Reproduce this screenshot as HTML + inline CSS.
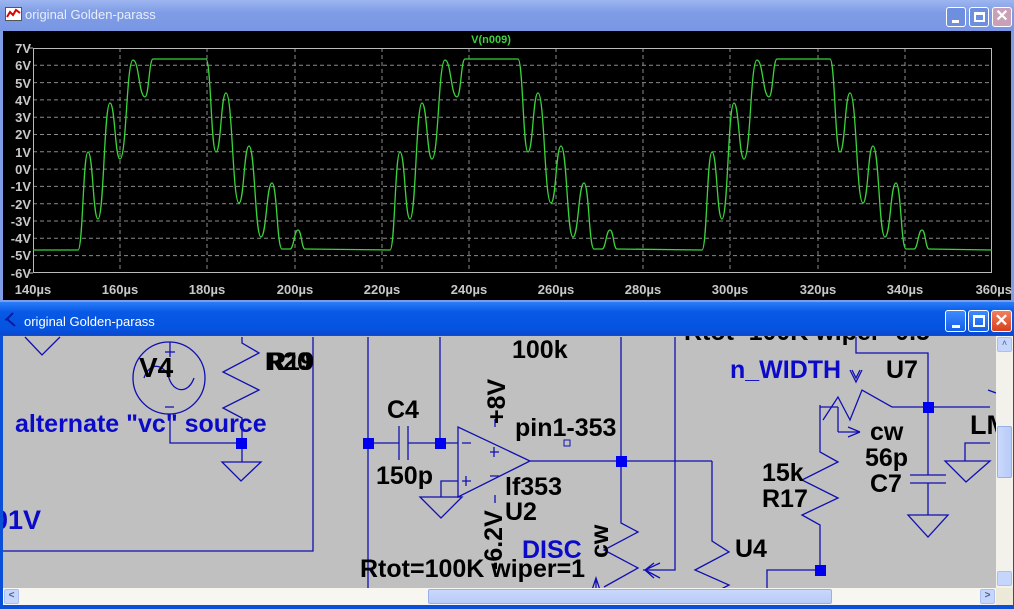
<!DOCTYPE html>
<html><head><meta charset="utf-8"><style>
*{margin:0;padding:0;box-sizing:border-box}
body{width:1014px;height:609px;overflow:hidden;background:#fff;font-family:"Liberation Sans",sans-serif;position:relative}
.abs{position:absolute}
.tb1{left:0;top:0;width:1014px;height:31px;background:linear-gradient(#9db5f0,#7f9de6 40%,#7896e3);}
.tb2{left:0;top:302px;width:1014px;height:33px;background:linear-gradient(#2a7ef8,#0859e6 30%,#0553e0 80%,#0a49d0);}
.title{color:#fff;font-size:13px;}
.btn{width:20px;height:20px;border:1px solid #fff;border-radius:3px;}
.lab{font-weight:bold;font-size:25px;color:#000;white-space:nowrap;line-height:1}
.blue{color:#0a0ac8}
</style></head><body>
<!-- top window -->
<div class="abs tb1"></div>
<svg class="abs" style="left:5px;top:7px" width="17" height="15"><rect x="0.5" y="0.5" width="16" height="13" fill="#fff" stroke="#555"/><polyline points="2,10 5,5 8,8 11,3 15,6" fill="none" stroke="#d00" stroke-width="2"/></svg>
<div class="abs title" style="left:25px;top:7px;color:#e8eefc">original Golden-parass</div>
<div class="abs btn" style="left:946px;top:7px;background:#6e8fe0"><div class="abs" style="left:5px;top:12px;width:7px;height:3px;background:#fff"></div></div>
<div class="abs btn" style="left:969px;top:7px;background:#6e8fe0"><div class="abs" style="left:4px;top:4px;width:11px;height:10px;border:2px solid #fff;border-top-width:3px"></div></div>
<div class="abs btn" style="left:992px;top:7px;background:#c8a0b8;color:#fff;font-size:16px;text-align:center;line-height:18px;font-weight:bold">✕</div>
<div class="abs" style="left:0;top:31px;width:1014px;height:271px;background:#7f9de6"></div>
<div class="abs" style="left:3px;top:31px;width:1008px;height:269px;background:#000"></div>
<svg class="abs" style="left:0;top:0" width="1014" height="300" font-family="Liberation Sans" font-size="13" font-weight="bold">
<g stroke="#8a8a8a" stroke-width="1" stroke-dasharray="4,3">
<line x1="33" x2="992" y1="65.3" y2="65.3"/><line x1="33" x2="992" y1="82.6" y2="82.6"/><line x1="33" x2="992" y1="99.9" y2="99.9"/><line x1="33" x2="992" y1="117.2" y2="117.2"/><line x1="33" x2="992" y1="134.5" y2="134.5"/><line x1="33" x2="992" y1="151.8" y2="151.8"/><line x1="33" x2="992" y1="169.1" y2="169.1"/><line x1="33" x2="992" y1="186.4" y2="186.4"/><line x1="33" x2="992" y1="203.7" y2="203.7"/><line x1="33" x2="992" y1="221" y2="221"/><line x1="33" x2="992" y1="238.3" y2="238.3"/><line x1="33" x2="992" y1="255.6" y2="255.6"/>
<line y1="48" y2="273" x1="120" x2="120"/><line y1="48" y2="273" x1="207" x2="207"/><line y1="48" y2="273" x1="295" x2="295"/><line y1="48" y2="273" x1="382" x2="382"/><line y1="48" y2="273" x1="469" x2="469"/><line y1="48" y2="273" x1="556" x2="556"/><line y1="48" y2="273" x1="643" x2="643"/><line y1="48" y2="273" x1="730" x2="730"/><line y1="48" y2="273" x1="818" x2="818"/><line y1="48" y2="273" x1="905" x2="905"/>
</g>
<rect x="33.5" y="48.5" width="958" height="224" fill="none" stroke="#bbb"/>
<g stroke="#bbb"><line x1="28" x2="33" y1="48" y2="48"/><line x1="28" x2="33" y1="273" y2="273"/></g>
<g fill="none" stroke="#3ad43a" stroke-width="1.3">
<path id="per" d="M78,250 C83,250 83,152 88,152 C93,152 93,219 98,219 C104,219 104,103 110,103 C115,103 115,159 120,159 C126.5,159 126.5,60 133,60 C139,60 139,97 145,97 C149,97 149,59 153,59 L206,59 C211,59 211,152 216,152 C221,152 221,93 226,93 C232.5,93 232.5,203 239,203 C244,203 244,146 249,146 C255,146 255,237 261,237 C266.5,237 266.5,183 272,183 C277,183 277,249 282,249 L290,249 C294,249 294,230 298,230 C301.5,230 301.5,249 305,249"/>
<use href="#per" transform="translate(312,0)"/>
<use href="#per" transform="translate(624,0)"/>
<path d="M33,250 L78,250 M305,249 L390,250 M617,249 L702,250 M929,249 L992,250"/>
</g>
<text x="491" y="43" fill="#3ad43a" text-anchor="middle" font-size="11">V(n009)</text>
<g fill="#c8c8c8" text-anchor="end">
<text x="31" y="53">7V</text><text x="31" y="70">6V</text><text x="31" y="88">5V</text><text x="31" y="105">4V</text><text x="31" y="122">3V</text><text x="31" y="139">2V</text><text x="31" y="157">1V</text><text x="31" y="174">0V</text><text x="31" y="191">-1V</text><text x="31" y="209">-2V</text><text x="31" y="226">-3V</text><text x="31" y="243">-4V</text><text x="31" y="260">-5V</text><text x="31" y="278">-6V</text>
</g>
<g fill="#c8c8c8" text-anchor="middle">
<text x="33" y="294">140µs</text><text x="120" y="294">160µs</text><text x="207" y="294">180µs</text><text x="295" y="294">200µs</text><text x="382" y="294">220µs</text><text x="469" y="294">240µs</text><text x="556" y="294">260µs</text><text x="643" y="294">280µs</text><text x="730" y="294">300µs</text><text x="818" y="294">320µs</text><text x="905" y="294">340µs</text><text x="1012" y="294" text-anchor="end">360µs</text>
</g>
</svg>
<!-- bottom window -->
<div class="abs tb2"></div>
<svg class="abs" style="left:4px;top:311px" width="16" height="18"><path d="M9,2 L3,8 L11,15 M3,8 L1,9" stroke="#0a1aa0" stroke-width="2" fill="none"/></svg>
<div class="abs title" style="left:24px;top:314px">original Golden-parass</div>
<div class="abs btn" style="left:945px;top:310px;width:21px;height:22px;background:linear-gradient(#3d8bff,#1460e8)"><div class="abs" style="left:6px;top:14px;width:8px;height:3px;background:#fff"></div></div>
<div class="abs btn" style="left:968px;top:310px;width:21px;height:22px;background:linear-gradient(#3d8bff,#1460e8)"><div class="abs" style="left:4px;top:4px;width:12px;height:12px;border:2px solid #fff;border-top-width:3px"></div></div>
<div class="abs btn" style="left:991px;top:310px;width:21px;height:22px;background:linear-gradient(#f08060,#d8401c);color:#fff;font-size:17px;text-align:center;line-height:20px;font-weight:bold">✕</div>
<div class="abs" style="left:0;top:335px;width:1014px;height:274px;background:#0a4fd8"></div>
<div class="abs" style="left:3px;top:336px;width:993px;height:252px;background:#c0c0c0;overflow:hidden">
<svg class="abs" style="left:-3px;top:-336px" width="1000" height="609" stroke="#1010b0" fill="none" stroke-width="1.3">
<polyline points="25,337 42,355 60,337"/>
<circle cx="169" cy="378" r="36"/>
<path d="M144,378 C150,360 165,365 169,378 C173,392 188,395 194,378"/>
<path d="M170,352 v-10 M165,352 h10 M170,347 v10 M165,407 h9"/>
<polyline points="170,414 170,443 241,443"/>
<polyline points="242,337 242,343 259,353 223,372 259,390 223,408 242,418 242,462"/>
<polygon points="222,462 261,462 241,481"/>
<polyline points="313,337 313,551 3,551"/>
<line x1="368" y1="337" x2="368" y2="600"/>
<line x1="368" y1="443" x2="399" y2="443"/><line x1="399" y1="426" x2="399" y2="460"/><line x1="408" y1="426" x2="408" y2="460"/>
<line x1="408" y1="443" x2="458" y2="443"/><line x1="440" y1="337" x2="440" y2="443"/>
<polygon points="458,427 458,497 530,461"/>
<path d="M462,443 h9 M462,481 h9 M466,476 v10 M490,452 h9 M494,447 v10 M490,476 h9 M495,427 v-8 M495,495 v8"/>
<polyline points="458,481 441,481 441,497"/><polygon points="420,497 462,497 441,518"/>
<rect x="564" y="440" width="6" height="6" stroke-width="1"/>
<line x1="530" y1="461" x2="712" y2="461"/>
<polyline points="621,337 621,523 638,532 604,550 638,568 604,587"/>
<polyline points="675,337 675,570 643,570"/><path d="M660,563 L645,570 L660,578 M654,563 L645,570 L654,578"/>
<polyline points="712,461 712,541 729,552 695,570 729,585 700,600"/>
<path d="M596,590 L596,578 M592,590 L596,578 L600,590"/>
<polyline points="820,405 820,442 820,452 838,462 802,480 838,498 802,515 820,525 820,570 767,570 767,600"/>
<line x1="820" y1="407" x2="838" y2="407"/><line x1="838" y1="407" x2="838" y2="432"/><line x1="838" y1="432" x2="860" y2="432"/><path d="M860,432 L848,427 M860,432 L848,437"/>
<polyline points="856,337 856,353 928,353 928,475"/>
<polyline points="823,420 838,397 850,420 862,390 892,407 990,407"/>
<path d="M850,370 L856,382 L862,370 M852,370 L856,378 L860,370"/>
<line x1="910" y1="475" x2="946" y2="475"/><line x1="910" y1="483" x2="946" y2="483"/>
<line x1="928" y1="483" x2="928" y2="515"/><polygon points="908,515 948,515 928,537"/>
<polygon points="945,461 990,461 966,482"/><polyline points="965,461 965,443 990,443"/>
<polyline points="988,390 996,393 M988,390 988,461 996,458"/>
<g fill="#0000f0" stroke="none">
<rect x="236" y="438" width="11" height="11"/><rect x="363" y="438" width="11" height="11"/><rect x="435" y="438" width="11" height="11"/><rect x="616" y="456" width="11" height="11"/><rect x="923" y="402" width="11" height="11"/><rect x="815" y="565" width="11" height="11"/>
</g>
</svg>
<div class="abs lab" style="left:136px;top:18px;font-size:28px">V4</div>
<div class="abs lab" style="left:262px;top:14px">R20</div>
<div class="abs lab" style="left:265px;top:14px">R19</div>
<div class="abs lab blue" style="left:12px;top:76px;font-size:25px">alternate "vc" source</div>
<div class="abs lab blue" style="left:-10px;top:171px;font-size:27px">01V</div>
<div class="abs lab" style="left:384px;top:62px">C4</div>
<div class="abs lab" style="left:373px;top:128px">150p</div>
<div class="abs lab" style="left:509px;top:2px">100k</div>
<div class="abs lab" style="left:512px;top:80px">pin1-353</div>
<div class="abs lab" style="left:502px;top:139px">lf353</div>
<div class="abs lab" style="left:502px;top:164px">U2</div>
<div class="abs lab" style="left:482px;top:88px;transform:rotate(-90deg);transform-origin:0 0">+8V</div>
<div class="abs lab" style="left:479px;top:234px;transform:rotate(-90deg);transform-origin:0 0">-6.2V</div>
<div class="abs lab" style="left:585px;top:222px;transform:rotate(-90deg);transform-origin:0 0">cw</div>
<div class="abs lab blue" style="left:519px;top:202px">DISC</div>
<div class="abs lab" style="left:357px;top:221px">Rtot=100K wiper=1</div>
<div class="abs lab" style="left:732px;top:201px">U4</div>
<div class="abs lab" style="left:681px;top:-16px">Rtot=100K wiper=0.5</div>
<div class="abs lab blue" style="left:727px;top:22px">n_WIDTH</div>
<div class="abs lab" style="left:883px;top:22px">U7</div>
<div class="abs lab" style="left:759px;top:125px">15k</div>
<div class="abs lab" style="left:759px;top:151px">R17</div>
<div class="abs lab" style="left:867px;top:84px">cw</div>
<div class="abs lab" style="left:862px;top:110px">56p</div>
<div class="abs lab" style="left:867px;top:136px">C7</div>
<div class="abs lab" style="left:967px;top:76px;font-size:27px">LM</div>
</div>
<!-- scrollbars -->
<div class="abs" style="left:996px;top:336px;width:17px;height:252px;background:#f3f1ec"></div>
<div class="abs" style="left:997px;top:337px;width:15px;height:15px;background:#c5d5fb;border:1px solid #aac0f0;border-radius:2px;font-size:9px;text-align:center;color:#4d6185">˄</div>
<div class="abs" style="left:997px;top:426px;width:15px;height:52px;background:linear-gradient(90deg,#cad8fc,#b8cbf8);border:1px solid #98b0e8;border-radius:2px"></div>
<div class="abs" style="left:997px;top:571px;width:15px;height:15px;background:#c5d5fb;border:1px solid #aac0f0;border-radius:2px"></div>
<div class="abs" style="left:3px;top:588px;width:993px;height:17px;background:#f7f6f1"></div>
<div class="abs" style="left:4px;top:589px;width:15px;height:15px;background:#c5d5fb;border:1px solid #aac0f0;border-radius:2px;font-size:10px;text-align:center;color:#4d6185;font-weight:bold">&lt;</div>
<div class="abs" style="left:428px;top:589px;width:404px;height:15px;background:linear-gradient(#cad8fc,#b8cbf8);border:1px solid #98b0e8;border-radius:2px"></div>
<div class="abs" style="left:980px;top:589px;width:15px;height:15px;background:#c5d5fb;border:1px solid #aac0f0;border-radius:2px;font-size:10px;text-align:center;color:#4d6185;font-weight:bold">&gt;</div>
<div class="abs" style="left:996px;top:588px;width:17px;height:17px;background:#ece9d8"></div>
</body></html>
